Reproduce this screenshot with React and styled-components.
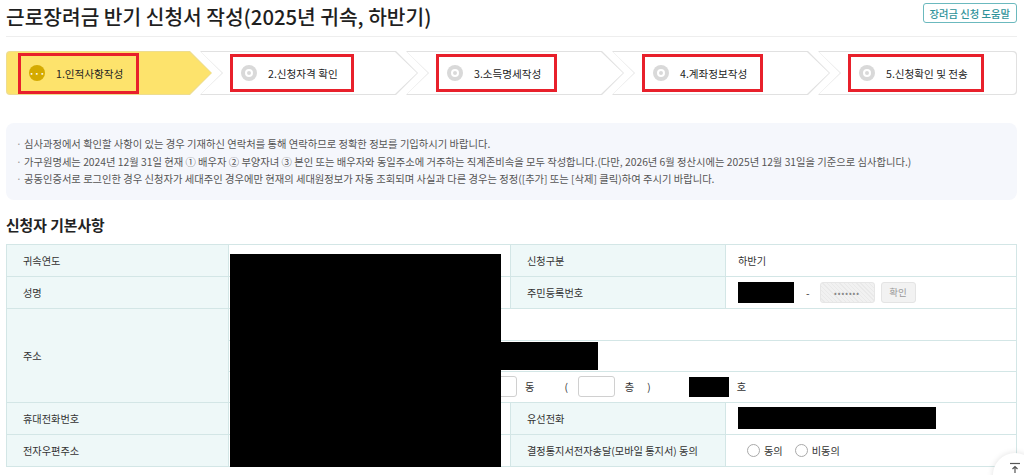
import React from "react";
import styled, { createGlobalStyle } from "styled-components";

const GlobalStyle = createGlobalStyle`
  body {
    margin: 0;
    background: #fff;
    font-family: "Noto Sans CJK KR", "Noto Sans", sans-serif;
    color: #222;
  }
  * { box-sizing: border-box; }
`;

const Page = styled.div`
  width: 1011px;
  margin-left: 6px;
  position: relative;
`;

const Header = styled.header`
  display: flex;
  justify-content: space-between;
  align-items: flex-start;
  height: 37px;
  border-bottom: 1px solid #eeeeee;
`;

const Title = styled.h1`
  margin: 0;
  font-size: 20.3px;
  font-weight: 500;
  line-height: 33px;
  color: #1f1f1f;
`;

const HelpButton = styled.button`
  margin-top: 3px;
  height: 20px;
  padding: 0 6px;
  font-family: inherit;
  font-size: 10.3px;
  font-weight: 500;
  color: #2f939a;
  background: #fff;
  border: 1px solid #6bb9be;
  border-radius: 3px;
`;

const Steps = styled.div`
  display: flex;
  margin-top: 14px;
  height: 44px;
`;

const notch = (first, last) => {
  if (first) return "polygon(0 0, calc(100% - 22px) 0, 100% 50%, calc(100% - 22px) 100%, 0 100%)";
  if (last) return "polygon(0 0, 100% 0, 100% 100%, 0 100%, 22px 50%)";
  return "polygon(0 0, calc(100% - 22px) 0, 100% 50%, calc(100% - 22px) 100%, 0 100%, 22px 50%)";
};

const StepShape = styled.div`
  flex: none;
  display: flex;
  width: ${(p) => p.$w}px;
  height: 44px;
  padding: 1px;
  margin-left: ${(p) => (p.$first ? 0 : -12)}px;
  background: ${(p) => (p.$active ? "#eedd8f" : "#e1e1e1")};
  clip-path: ${(p) => notch(p.$first, p.$last)};
  border-radius: ${(p) => (p.$first ? "4px 0 0 4px" : p.$last ? "0 4px 4px 0" : "0")};
`;

const StepFill = styled.div`
  flex: 1;
  display: flex;
  align-items: center;
  padding-left: ${(p) => (p.$first ? 11 : 29)}px;
  background: ${(p) => (p.$active ? "#fde36c" : "#fff")};
  clip-path: ${(p) => notch(p.$first, p.$last)};
  border-radius: inherit;
`;

const MarkBox = styled.div`
  display: flex;
  align-items: center;
  gap: 11px;
  height: ${(p) => (p.$tall ? 41 : 38)}px;
  padding: 0 13px 0 8px;
  border: 3px solid #e8202b;
`;

const StepIcon = styled.span`
  flex: none;
  width: 16px;
  height: 16px;
  border-radius: 50%;
  display: flex;
  align-items: center;
  justify-content: center;
  background: ${(p) => (p.$active ? "#d4aa00" : "#d9d9d9")};
  color: #fff;
  font-size: 9px;
  line-height: 1;
  font-weight: 700;
`;

const Ring = styled.span`
  width: 8px;
  height: 8px;
  border-radius: 50%;
  border: 2px solid #fff;
`;

const StepLabel = styled.span`
  font-size: 10.6px;
  color: #222;
  white-space: nowrap;
`;

const Notice = styled.ul`
  margin: 28px 0 0;
  padding: 12px 10px 12px 10px;
  list-style: none;
  background: #f5f7fc;
  border-radius: 8px;
`;

const NoticeItem = styled.li`
  position: relative;
  padding-left: 8px;
  font-size: 10.3px;
  line-height: 17.6px;
  color: #555;
  white-space: nowrap;
  &::before {
    content: "·";
    position: absolute;
    left: 0;
    color: #999;
  }
`;

const SectionTitle = styled.h2`
  margin: 15px 0 0;
  font-size: 14.8px;
  font-weight: 700;
  line-height: 20px;
  color: #222;
`;

const TableWrap = styled.div`
  position: relative;
  margin-top: 9px;
`;

const Table = styled.table`
  width: 100%;
  border-collapse: collapse;
  table-layout: fixed;
  border-top: 1px solid #d3e6e6;
`;

const Th = styled.th`
  height: 32px;
  padding: 0 0 0 16px;
  text-align: left;
  font-size: 10.2px;
  font-weight: 400;
  color: #333;
  background: #eef8f8;
  border: 1px solid #d3e6e6;
`;

const Td = styled.td`
  height: 32px;
  padding: ${(p) => (p.$flush ? 0 : "0 0 0 12px")};
  font-size: 10.2px;
  color: #333;
  border: 1px solid #d3e6e6;
  vertical-align: middle;
`;

const Inline = styled.div`
  display: flex;
  align-items: center;
`;

const AddrLine = styled.div`
  display: flex;
  align-items: center;
  height: 31px;
  padding-left: 12px;
  & + & {
    border-top: 1px solid #d3e6e6;
  }
`;

const Redacted = styled.span`
  display: inline-block;
  flex: none;
  width: ${(p) => p.$w}px;
  height: ${(p) => p.$h || 21}px;
  margin-left: ${(p) => p.$ml || 0}px;
  background: #000;
`;

const Cover = styled.div`
  position: absolute;
  left: ${(p) => p.$x}px;
  top: ${(p) => p.$y}px;
  width: ${(p) => p.$w}px;
  height: ${(p) => p.$h}px;
  background: #000;
`;

const TextInput = styled.span`
  display: inline-block;
  flex: none;
  width: ${(p) => p.$w}px;
  height: 21px;
  margin-left: ${(p) => p.$ml || 0}px;
  border: 1px solid #d0d0d0;
  border-radius: 3px;
  background: #fff;
`;

const Word = styled.span`
  margin-left: ${(p) => p.$ml || 0}px;
  font-size: 10.2px;
  color: #333;
`;

const Masked = styled.span`
  display: inline-flex;
  align-items: center;
  justify-content: center;
  width: 55px;
  height: 21px;
  margin-left: 10px;
  border-radius: 3px;
  border: 1px solid #e6e6e6;
  background: repeating-linear-gradient(45deg, #f1f1f1 0 2px, #e9e9e9 2px 3px);
  color: #888;
  font-size: 8px;
  letter-spacing: 1px;
`;

const SmallButton = styled.span`
  display: inline-flex;
  align-items: center;
  justify-content: center;
  width: 35px;
  height: 21px;
  margin-left: 6px;
  border-radius: 3px;
  border: 1px solid #e4e4e4;
  background: #f2f2f2;
  color: #9a9a9a;
  font-size: 9.5px;
`;

const Radio = styled.span`
  display: inline-block;
  width: 13px;
  height: 13px;
  margin-left: ${(p) => p.$ml || 0}px;
  border: 1px solid #a9a9a9;
  border-radius: 50%;
  background: #fff;
`;

const RadioText = styled.span`
  margin-left: 4px;
  font-size: 10.2px;
  color: #333;
`;

const TopButton = styled.button`
  position: fixed;
  right: -13px;
  bottom: -22px;
  width: 44px;
  height: 44px;
  border-radius: 50%;
  border: none;
  background: #fff;
  box-shadow: 0 0 6px rgba(0, 0, 0, 0.12);
  display: flex;
  justify-content: center;
  padding: 9px 0 0;
`;

const steps = [
  { label: "1.인적사항작성", w: 206 },
  { label: "2.신청자격 확인", w: 218 },
  { label: "3.소득명세작성", w: 218 },
  { label: "4.계좌정보작성", w: 218 },
  { label: "5.신청확인 및 전송", w: 199 },
];

const notices = [
  "심사과정에서 확인할 사항이 있는 경우 기재하신 연락처를 통해 연락하므로 정확한 정보를 기입하시기 바랍니다.",
  "가구원명세는 2024년 12월 31일 현재 ① 배우자 ② 부양자녀 ③ 본인 또는 배우자와 동일주소에 거주하는 직계존비속을 모두 작성합니다.(다만, 2026년 6월 정산시에는 2025년 12월 31일을 기준으로 심사합니다.)",
  "공동인증서로 로그인한 경우 신청자가 세대주인 경우에만 현재의 세대원정보가 자동 조회되며 사실과 다른 경우는 정정([추가] 또는 [삭제] 클릭)하여 주시기 바랍니다.",
];

export default function App() {
  return (
    <>
      <GlobalStyle />
      <Page>
        <Header>
          <Title>근로장려금 반기 신청서 작성(2025년 귀속, 하반기)</Title>
          <HelpButton>장려금 신청 도움말</HelpButton>
        </Header>

        <Steps>
          {steps.map((s, i) => {
            const first = i === 0;
            const last = i === steps.length - 1;
            return (
              <StepShape key={s.label} $w={s.w} $first={first} $last={last} $active={first}>
                <StepFill $first={first} $last={last} $active={first}>
                  <MarkBox $tall={first}>
                    <StepIcon $active={first}>{first ? "···" : <Ring />}</StepIcon>
                    <StepLabel>{s.label}</StepLabel>
                  </MarkBox>
                </StepFill>
              </StepShape>
            );
          })}
        </Steps>

        <Notice>
          {notices.map((n) => (
            <NoticeItem key={n}>{n}</NoticeItem>
          ))}
        </Notice>

        <SectionTitle>신청자 기본사항</SectionTitle>

        <TableWrap>
          <Table>
            <colgroup>
              <col style={{ width: 222 }} />
              <col style={{ width: 282 }} />
              <col style={{ width: 215 }} />
              <col />
            </colgroup>
            <tbody>
              <tr>
                <Th>귀속연도</Th>
                <Td>2025</Td>
                <Th>신청구분</Th>
                <Td>하반기</Td>
              </tr>
              <tr>
                <Th>성명</Th>
                <Td />
                <Th>주민등록번호</Th>
                <Td>
                  <Inline>
                    <Redacted $w={56} />
                    <Word $ml={12}>-</Word>
                    <Masked>•••••••</Masked>
                    <SmallButton>확인</SmallButton>
                  </Inline>
                </Td>
              </tr>
              <tr>
                <Th>주소</Th>
                <Td colSpan={3} $flush>
                  <AddrLine />
                  <AddrLine />
                  <AddrLine>
                    <TextInput $w={276} />
                    <Word $ml={8}>동</Word>
                    <Word $ml={30}>(</Word>
                    <TextInput $w={37} $ml={10} />
                    <Word $ml={10}>층</Word>
                    <Word $ml={13}>)</Word>
                    <Redacted $w={40} $h={20} $ml={38} />
                    <Word $ml={8}>호</Word>
                  </AddrLine>
                </Td>
              </tr>
              <tr>
                <Th>휴대전화번호</Th>
                <Td />
                <Th>유선전화</Th>
                <Td>
                  <Inline>
                    <Redacted $w={198} $h={22} />
                  </Inline>
                </Td>
              </tr>
              <tr>
                <Th>전자우편주소</Th>
                <Td />
                <Th>결정통지서전자송달(모바일 통지서) 동의</Th>
                <Td>
                  <Inline>
                    <Radio $ml={9} />
                    <RadioText>동의</RadioText>
                    <Radio $ml={12} />
                    <RadioText>비동의</RadioText>
                  </Inline>
                </Td>
              </tr>
            </tbody>
          </Table>
          <Cover $x={224} $y={10} $w={271} $h={215} />
          <Cover $x={495} $y={98} $w={97} $h={28} />
        </TableWrap>
      </Page>
      <TopButton aria-label="맨 위로">
        <svg width="12" height="12" viewBox="0 0 12 12" fill="none" stroke="#555" strokeWidth="1.2">
          <path d="M1 1.5h10" />
          <path d="M6 11V4.5M3.5 7L6 4.5 8.5 7" />
        </svg>
      </TopButton>
    </>
  );
}
